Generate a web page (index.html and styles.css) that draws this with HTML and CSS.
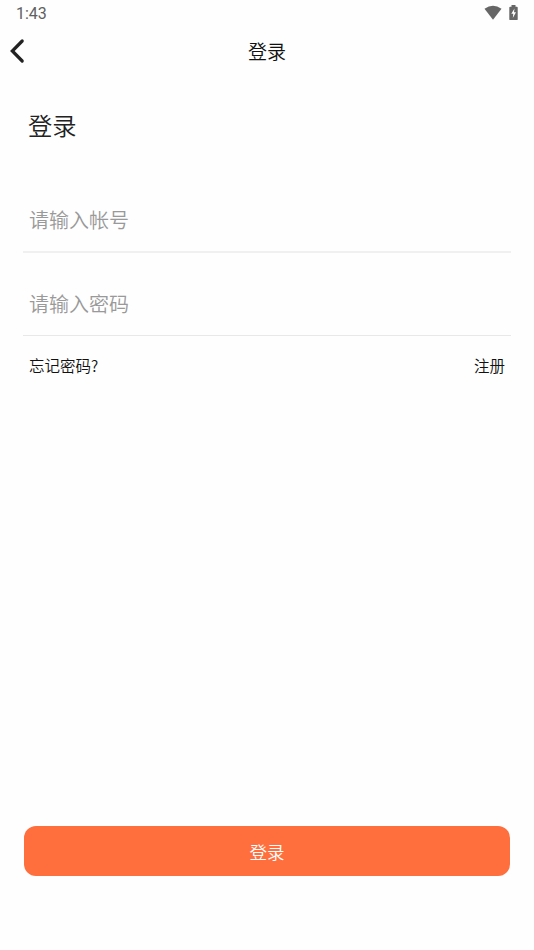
FILE: index.html
```html
<!DOCTYPE html>
<html lang="zh-CN">
<head>
<meta charset="utf-8">
<meta name="viewport" content="width=device-width, initial-scale=1">
<title>登录</title>
<link rel="stylesheet" href="styles.css">
</head>
<body>
<div class="screen">
  <div class="status">
    <span class="time">1:43</span>
    <div class="status-icons">
      <svg width="18" height="15" viewBox="0 0 18 15" aria-hidden="true"><path d="M0.500 3.700Q9-2 17.500 3.700L9 14.700Z" fill="#666"/></svg>
      <svg width="9" height="16" viewBox="0 0 9 16" aria-hidden="true"><path d="M2.500 0h4v1.700h1.300q.9 0 .9.9v11.600q0 .9-.9.9H1.200q-.9 0-.9-.9V2.600q0-.9.9-.9h1.300Z" fill="#666"/><path d="M5.500 3.500 2.300 8.700h2L3.800 13 7 7.200H5Z" fill="#fff"/></svg>
    </div>
  </div>
  <header class="nav">
    <a class="back" aria-label="返回"><svg width="16" height="26" viewBox="0 0 16 26" aria-hidden="true"><path d="M13.200 3 3.300 13l9.900 10" fill="none" stroke="#222" stroke-width="3.200" stroke-linecap="round"/></svg></a>
    <span class="nav-title">登录</span>
  </header>
  <main class="content">
    <h1 class="heading">登录</h1>
    <form class="form">
      <label class="field">请输入帐号</label>
      <label class="field password">请输入密码</label>
      <div class="links"><a>忘记密码?</a><a>注册</a></div>
      <button class="submit" type="button">登录</button>
    </form>
  </main>
</div>
</body>
</html>
```
FILE: styles.css
```css
* { box-sizing: border-box; }
body {
  margin: 0;
  background: #fefefe;
  color: #111;
  font-family: "Noto Sans CJK SC", sans-serif;
  font-weight: 350;
}
.screen { height: 950px; display: flex; flex-direction: column; overflow: hidden; }
.status {
  height: 28px;
  flex: none;
  display: flex;
  justify-content: space-between;
  padding: 5px 16px 0 16px;
}
.time { font: 400 16px/18px Roboto, sans-serif; color: #606060; }
.status-icons { display: flex; gap: 7px; }
.nav {
  height: 46px;
  flex: none;
  display: grid;
  grid-template-columns: 40px 1fr 40px;
  align-items: center;
}
.back { display: flex; padding-left: 9px; }
.nav-title { text-align: center; font-size: 19px; line-height: 28px; color: #111; }
.content { flex: 1; display: flex; flex-direction: column; padding: 32px 23px 74px; }
.heading { margin: 0 0 0 5px; font-size: 24.3px; font-weight: 350; line-height: 38px; color: #222; }
.form { flex: 1; display: flex; flex-direction: column; margin-top: 42px; }
.field {
  height: 67px;
  padding: 16px 6px 0;
  font-size: 20px;
  line-height: 36px;
  color: #999;
  border-bottom: 2px solid #f0f0f0;
}
.password { margin-top: 16px; padding-top: 17px; border-bottom: 1px solid #e8e8e8; }
.links {
  display: flex;
  justify-content: space-between;
  margin-top: 17px;
  padding: 0 6px;
  font-size: 15.5px;
  line-height: 24px;
  color: #111;
}
.submit {
  height: 50px;
  margin: auto 1px 0;
  padding: 0;
  border: 0;
  border-radius: 12px;
  background: #ff6e3d;
  color: #fff;
  font: 350 17.5px "Noto Sans CJK SC", sans-serif;
}
```
